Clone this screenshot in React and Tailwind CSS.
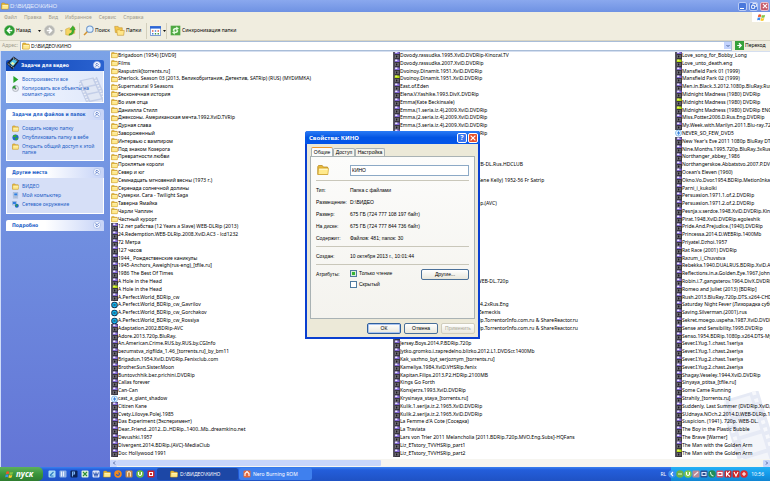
import React from 'react';

const col1 = [
  'Brigadoon (1954) [DVD9]', 'Films', 'Rasputnik[torrents.ru]',
  'Sherlock. Season 03 (2013, Великобритания, Детектив, SATRip) (RUS) (MYDИМКА)',
  'Supernatural 9 Seasons', 'Бесконечная история', 'Во имя отца', 'Даниэлла Стилл',
  'Джексоны. Американская мечта.1992.XviD.TVRip', 'Дурная слава', 'Завороженный',
  'Интервью с вампиром', 'Под знаком Козерога', 'Превратности любви', 'Проклятые короли',
  'Север и юг', 'Семнадцать мгновений весны (1973 г.)', 'Серенада солнечной долины',
  'Сумерки. Сага - Twilight Saga', 'Таверна Ямайка', 'Чарли Чаплин', 'Частный курорт',
  '12 лет рабства (12 Years a Slave) WEB-DLRip (2013)', '24.Redemption.WEB-DLRip.2008.XviD.AC3 - lcd1232',
  '72 Метра', '127 часов', '1944_ Рождественские каникулы', '1945-Anchors_Aweigh(rus-eng)_[tfile.ru]',
  '1986 The Best Of Times', 'A Hole in the Head', 'A Hole in the Head', 'A.Perfect.World_BDRip_cw',
  'A.Perfect.World_BDRip_cw_Gavrilov', 'A.Perfect.World_BDRip_cw_Gorchakov', 'A.Perfect.World_BDRip_cw_Rossiya',
  'Adaptation.2002.BDRip-AVC', 'Adore.2013.720p.BluRay.', 'An.American.Crime.RUS.by.RUS.by.CGInfo',
  'bezumstva_zigfilda_1.46_[torrents.ru]_by_bm11', 'Brigadun.1954.XviD.DVDRip.Fenixclub.com',
  'Brother.Sun.Sister.Moon', 'Buntovchhik.bez.prichini.DVDRip', 'Callas forever', 'Can-Can',
  'cast_a_giant_shadow', 'Citizen Kane', 'Cvety.Lilovye.Polej.1985', 'Das Experiment (Эксперимент)',
  'Dear..Friend..2012..D..HDRip..1400..Mb..dreamkino.net', 'Devushki.1957',
  'Divergent.2014.BDRip.(AVC)-MediaClub', 'Doc Hollywood 1991',
];

const col2 = [
  'Dovody.rassudka.1995.XviD.DVDRip-Kinozal.TV', 'Dovody.rassudka.2007.XviD.DVDRip',
  'Dvoinoy.Dinamit.1951.XviD.DVDRip', 'Dvoinoy.Dinamit.1951.XviD.DVDRip', 'East.of.Eden',
  'Elena.V.Yashike.1993.DivX.DVDRip', 'Emma(Kate Beckinsale)', 'Emma.(1.seria.iz.4).2009.XviD.DVDRip',
  'Emma.(2.seria.iz.4).2009.XviD.DVDRip', 'Emma.(3.seria.iz.4).2009.XviD.DVDRip',
  'Emma.(4.seria.iz.4).2009.XviD.DVDRip', 'Fanny', 'Flipped', 'Forrest Gump',
  'Frances.2012.BDRip.720p.x264.WEB-DL.Rus.HDCLUB', 'Gigi', 'Invitation to the Dance. Musical (Gene Kelly) 1952-56 Fr Satrip',
  'Giant', 'Gilda', 'Golubaya.bezdna.1988.D.Cut.BDRip.(AVC)', 'Grease', 'Hair', 'Harvey', 'Heidi', 'Hello Dolly', 'High Noon', 'Holiday',
  'Igra.v.chetyre.ruki.1980.PLUS', 'Inside.Llewyn.Davis.2013.BDbi', 'Inside.Llewyn.Davis.2013.Drama.WEB-DL.720p', 'Jane Eyre',
  'Iron.Man.3.2013.D.BDRip.1400Mb', 'Jack.Reacher.2012.BDRip.720p.x264.2xRus.Eng',
  'Back to the Future Part II. Robert Zemeckis', 'James.Bond.Collection.1080p.BDRip.TorrentorInfo.com.ru & ShareReactor.ru',
  'James.Bond.Collection.1080p.BDRip.TorrentorInfo.com.ru & ShareReactor.ru', 'Jersey', 'Jersey.Boys.2014.P.BDRip.720p',
  'Jytko.gromko.i.zapredelno.blizko.2012.L1.DVDScr.1400Mb', 'Kak_vazhno_byt_serjoznym_[torrents.ru]',
  'Kameliya.1984.XviD.VHSRip.fenix', 'Kapitan.Filips.2013.P2.HDRip.2100MB', 'Kings Go Forth',
  'Konsjerzs.1993.XviD.DVDRip', 'Krysinaya_staya_[torrents.ru]', 'Kulik.1.serija.iz.2.1965.XviD.DVDRip',
  'Kulik.2.serija.iz.2.1965.XviD.DVDRip', "La Femme d'A Cote (Соседка)", 'La Traviata',
  'Lars von Trier 2011 Melancholia [2011.BDRip.720p.MVO.Eng.Subs]-HQFans',
  'Liz_ETstory_TVVHSRip_part1', 'Liz_ETstory_TVVHSRip_part2',
];

const col3 = [
  'Love_song_for_Bobby_Long', 'Love_unto_death.eng', 'Mansfield Park 01 (1999)', 'Mansfield Park 02 (1999)',
  'Men.in.Black.3.2012.1080p.BluRay.Rus.Eng', 'Midnight Madness (1980) DVDRip', 'Midnight Madness (1980) DVDRip',
  'Midnight Madness (1980) DVDRip ENG', 'Miss.Potter.2006.D.Rus.Eng.DVDRip', 'My.Week.with.Marilyn.2011.Blu-ray.720p',
  'NEVER_SO_FEW_DVD5', "New Year's Eve 2011 1080p BluRay DTS x264", 'Nine.Months.1995.720p.BluRay.3xRus.Eng',
  'Northanger_abbey_1986', 'Northangerskoe.Abbatstvo.2007.P.DVDRip', "Ocean's Eleven (1960)",
  'Okno.Vo.Dvor.1954.BDRip.MetionInka', 'Parni_i_kukolki', 'Persuasion.1971.1.of.2.DVDRip',
  'Persuasion.1971.2.of.2.DVDRip', 'Pesnja.v.serdce.1948.XviD.DVDRip.Kinozal', 'Pirat.1948.XviD.DVDRip.egoleshik',
  'Pride.And.Prejudice.(1940).DVDRip', 'Princessa.2014.D.WEBRip.1400Mb', 'Priyatel.Dzhoi.1957',
  'Rat Race (2001) DVDRip', 'Razum_i_Chuvstva', 'Rebekka.1940.DUALRUS.BDRip.XviD.AC3',
  'Reflections.in.a.Golden.Eye.1967.John', 'Robin.i.7.gangsterov.1964.DivX.DVDRip', 'Romeo and Juliet (2013) [BDRip]',
  'Rush.2013.BluRay.720p.DTS.x264-CHD', 'Saturday Night Fever (Лихорадка субботы)', 'Saving.Silverman.(2001).rus',
  'Sekret.moego.uspeha.1987.XviD.DVDRip', 'Sense and Sensibility.1995.DVDRip', 'Senso.1954.BDRip.1080p.x264.DTS-My',
  'Sever.I.Yug.1.chast.1seriya', 'Sever.I.Yug.1.chast.2seriya', 'Sever.I.Yug.2.chast.1seriya',
  'Sever.I.Yug.2.chast.2seriya', 'Shagay.Veseley.1944.XviD.DVDRip', 'Sinyaya_ptitsa_[tfile.ru]',
  'Some Came Running', 'Strahily_[torrents.ru]', 'Suddenly, Last Summer (DVDRip,XviD,RUS)',
  'SUdnaya.NOch.2.2014.D.WEB-DLRip.1400', 'Suspicion. (1941). 720p. WEB-DL.', 'The Boy in the Plastic Bubble',
  'The Brave [Warner]', 'The Man with the Golden Arm', 'The Man with the Golden Arm',
];

const special = {
  0: { 30: 'green', 32: 'disc', 33: 'disc', 34: 'disc', 44: 'bolt' },
  1: { 3: 'green' },
  2: { 1: 'green', 6: 'green', 7: 'green', 10: 'bolt', 51: 'green' },
};

function Folder({ className = 'size-2' }) {
  return (
    <svg viewBox="0 0 16 16" className={`shrink-0 ${className}`} aria-hidden="true">
      <path d="M1 3.500 2 2h5l1.500 2H14v10H1z" fill="#e9b93a" stroke="#b58a1e" strokeWidth="1" />
      <path d="M2 5.500h13.500L14.500 14H1.500z" fill="#ffe98c" stroke="#c99a27" strokeWidth=".8" />
      <path d="M3 7h11" stroke="#fffbd6" strokeWidth="1.300" />
    </svg>
  );
}

function FileIcon({ kind }) {
  if (kind === 'folder') return <Folder className="h-2 w-[7px]" />;
  if (kind === 'disc')
    return (
      <svg viewBox="0 0 16 16" className="h-2 w-[7px] shrink-0" aria-hidden="true">
        <circle cx="8" cy="8" r="7.500" fill="#0d2a4a" />
        <circle cx="8" cy="8" r="5.500" fill="#16b4ec" />
        <circle cx="8" cy="8" r="2.200" fill="#06324f" />
        <circle cx="8" cy="8" r="1" fill="#d8f6ff" />
      </svg>
    );
  if (kind === 'bolt')
    return (
      <svg viewBox="0 0 16 16" className="h-2 w-[7px] shrink-0" aria-hidden="true">
        <circle cx="8" cy="8" r="7" fill="#e4f2ff" stroke="#5aa5e4" strokeWidth="1.500" />
        <path d="M9 2 4.500 9H8l-1 5 5-7H8.500z" fill="#1769d2" />
      </svg>
    );
  const top = kind === 'green' ? '#b6e010' : '#8368d6';
  return (
    <svg viewBox="0 0 16 16" className="h-2 w-[7px] shrink-0" preserveAspectRatio="none" aria-hidden="true">
      <path d="M0 0h16v16H0z" fill="#39363f" />
      <path d="M4 1h11v5H4z" fill={top} />
      <path d="M5 1h5v3H5z" fill={kind === 'green' ? '#e6f56a' : '#efeafc'} />
      <path d="M1 1h2v2H1zM1 5h2v2H1zM1 9h2v2H1zM1 13h2v2H1z" fill="#a9a6b3" />
      <path d="M5 8h8v6H5z" fill="#77747e" />
      <path d="M7 9h3v4H7z" fill="#17151c" />
    </svg>
  );
}

function Column({ items, index }) {
  return (
    <ul className="grid min-h-0 min-w-0 grid-rows-[repeat(52,minmax(0,1fr))]">
      {items.map((t, i) => {
        const kind = index === 0 && i < 22 ? 'folder' : special[index][i] || 'video';
        return (
          <li key={i} className="flex min-h-0 items-center whitespace-nowrap">
            <FileIcon kind={kind} />
            {t}
          </li>
        );
      })}
    </ul>
  );
}

function FilmStrip({ className, color }) {
  return (
    <svg viewBox="0 0 48 72" className={className} preserveAspectRatio="none" aria-hidden="true">
      <g transform="rotate(-17 24 36)">
        <path d="M4 4h42v80H4z" fill={color} />
        <path d="M13 7h23v17H13zM13 28h23v17H13zM13 49h23v17H13zM13 70h23v14H13z" fill="#fff" opacity=".5" />
        <path d="M8 4v80M41 4v80" stroke="#fff" strokeWidth="4" strokeDasharray="4 4" opacity=".7" />
      </g>
    </svg>
  );
}

function Chevron({ down }) {
  return (
    <svg viewBox="0 0 18 18" className="size-2 shrink-0" aria-hidden="true">
      <circle cx="9" cy="9" r="8" fill="#f4f7ff" stroke="#9db4e6" strokeWidth="1.500" />
      <g transform={down ? 'rotate(180 9 9)' : undefined}>
        <path d="M5.500 8.500 9 5l3.500 3.500M5.500 13 9 9.500l3.500 3.500" fill="none" stroke="#2d55b5" strokeWidth="1.800" />
      </g>
    </svg>
  );
}

function Panel({ title, primary, closed, children }) {
  return (
    <section className="relative">
      <h2>
        <button
          className={`flex h-[11px] w-full items-center justify-between rounded-t-[2px] pr-[3px] font-[DejaVu_Sans_Condensed,sans-serif] text-[5px] leading-none font-bold ${
            primary
              ? 'bg-linear-to-r from-[#0f48b8] to-[#2a62d0] pl-[15px] text-white'
              : 'bg-linear-to-r from-white from-40% to-[#c6d3f7] pl-[6px] text-[#215dc6]'
          }`}
        >
          {title}
          <Chevron down={closed} />
        </button>
      </h2>
      {children && (
        <ul className={`relative flex flex-col gap-[2px] border border-t-0 border-white px-[5px] py-[5px] text-[#215dc6] ${primary ? 'bg-linear-to-r from-[#f2f6ff] to-[#dfe8fb]' : 'bg-[#d6dff7]'}`}>
          {children}
        </ul>
      )}
    </section>
  );
}

function Task({ icon, children }) {
  return (
    <li className="relative">
      <a href="#task" className="flex items-start gap-[3px] leading-[6px]">
        <span className="flex size-[7px] shrink-0 items-center justify-center">{icon}</span>
        <span>{children}</span>
      </a>
    </li>
  );
}

const Globe = () => (
  <svg viewBox="0 0 16 16" className="size-[7px]" aria-hidden="true">
    <circle cx="8" cy="8" r="7" fill="#1f66c9" />
    <path d="M3 3q5-3 8 0l-2 4-4 1-3-2zM8 9l5-1 1 3-4 4-3-3z" fill="#34a53a" />
  </svg>
);
const Computer = () => (
  <svg viewBox="0 0 16 16" className="size-[7px]" aria-hidden="true">
    <path d="M3 1h10v9H3z" fill="#d8e4f4" stroke="#6b87b5" />
    <path d="M5 3h7v5H5z" fill="#2f7ee0" />
    <path d="M6 10h5v2h3v3H2v-3h4z" fill="#a9bcd8" />
  </svg>
);
const Network = () => (
  <svg viewBox="0 0 16 16" className="size-[7px]" aria-hidden="true">
    <path d="M1 1h9v8H1z" fill="#d8e4f4" stroke="#6b87b5" />
    <path d="M2 2h7v5H2z" fill="#2f7ee0" />
    <circle cx="11" cy="11" r="4.500" fill="#1f66c9" />
    <path d="M8 9q3-3 5 0l-2 3-2 1z" fill="#34a53a" />
  </svg>
);

function WinLogo({ className }) {
  return (
    <svg viewBox="0 0 16 16" className={className} aria-hidden="true">
      <path d="M2.500 3q2.500-1.500 5 0l-1 4.500q-2.500-1.300-5 0z" fill="#f0562b" />
      <path d="M8.500 3.500q2.500 1.300 6 0l-1.200 4.500q-2.800 1.300-5.800 0z" fill="#83c443" />
      <path d="M1.200 8.500q2.500-1.300 5 0l-1 4.500q-2.500-1.300-5 0z" fill="#3b8df0" />
      <path d="M7.200 9q2.800 1.300 5.800 0l-1.200 4.500q-2.800 1.300-5.800 0z" fill="#fbc82a" />
    </svg>
  );
}

function WinControls() {
  return (
    <div className="flex gap-[2px]">
      <button aria-label="Свернуть" className="flex size-[9px] items-end rounded-[2px] border border-[#b9cbf5] bg-[#4a78dc] p-px">
        <span className="h-px w-[4px] bg-white" />
      </button>
      <button aria-label="Восстановить" className="flex size-[9px] items-center justify-center rounded-[2px] border border-[#b9cbf5] bg-[#4a78dc]">
        <svg viewBox="0 0 10 10" className="size-[6px]" aria-hidden="true">
          <path d="M3 3V1h6v5H7M1 4h5v5H1z" fill="none" stroke="#fff" strokeWidth="1.500" />
        </svg>
      </button>
      <button aria-label="Закрыть" className="flex size-[9px] items-center justify-center rounded-[2px] border border-[#e3bfd0] bg-[#c75c6c]">
        <svg viewBox="0 0 10 10" className="size-[6px]" aria-hidden="true">
          <path d="m1.500 1.500 7 7m0-7-7 7" stroke="#fff" strokeWidth="1.800" />
        </svg>
      </button>
    </div>
  );
}

const Sep = () => <span className="h-4 w-px bg-[#d3cfbc]" />;
const Caret = ({ dim }) => (
  <svg viewBox="0 0 6 4" className="h-[2px] w-[3px]" aria-hidden="true">
    <path d="M0 0h6L3 4z" fill={dim ? '#aaa' : '#111'} />
  </svg>
);
const Arrow = ({ left }) => (
  <path d={left ? 'M9 4 5 8l4 4M5 8h7' : 'M7 4l4 4-4 4M11 8H4'} fill="none" stroke="#fff" strokeWidth="2.200" />
);

function Toolbar() {
  return (
    <div className="flex h-[19px] items-center border-b border-[#d9d5c3] bg-[#f0eddf] pl-[4px]">
      <button className="flex w-[30px] items-center gap-px">
        <svg viewBox="0 0 16 16" className="size-[11px]" aria-hidden="true">
          <circle cx="8" cy="8" r="7.500" fill="#2c9c32" stroke="#87c789" strokeWidth=".8" />
          <Arrow left />
        </svg>
        Назад
      </button>
      <span className="flex w-[10px] justify-center"><Caret /></span>
      <button aria-label="Вперед" className="w-[13px]">
        <svg viewBox="0 0 16 16" className="size-[11px]" aria-hidden="true">
          <circle cx="8" cy="8" r="7.500" fill="#b9b9b5" stroke="#d4d4cf" />
          <Arrow />
        </svg>
      </button>
      <span className="flex w-[8px] justify-center"><Caret dim /></span>
      <button aria-label="Вверх" className="w-[14px]">
        <svg viewBox="0 0 16 16" className="size-[11px]" aria-hidden="true">
          <path d="M1 6l5-2 2 1 6-2v9l-9 3-4-1z" fill="#f6d566" stroke="#c39a2b" strokeWidth=".7" />
          <path d="M6 13q5-1 4-6H7l4.500-6L15 7h-2q1 7-7 8z" fill="#3bb32f" stroke="#1f7c1b" strokeWidth=".5" />
        </svg>
      </button>
      <Sep />
      <button className="ml-[3px] flex w-[31px] items-center gap-px">
        <svg viewBox="0 0 16 16" className="size-[11px] shrink-0" aria-hidden="true">
          <path d="m1.500 14.500 5-5" stroke="#d4932f" strokeWidth="2.200" />
          <circle cx="10" cy="6" r="4.700" fill="#dff0ff" stroke="#6b95ca" strokeWidth="1.500" />
        </svg>
        Поиск
      </button>
      <button className="flex w-[32px] items-center gap-px">
        <svg viewBox="0 0 16 16" className="size-[11px] shrink-0" aria-hidden="true">
          <path d="M1 2h5l1 2h5v7H2z" fill="#f4c64c" stroke="#c08f22" strokeWidth=".8" />
          <path d="M4 7h4l1 1h6l-1 7H5z" fill="#ffe68a" stroke="#c08f22" strokeWidth=".8" />
        </svg>
        Папки
      </button>
      <Sep />
      <button aria-label="Вид" className="ml-[3px] flex w-[16px] items-center gap-[2px]">
        <svg viewBox="0 0 16 14" className="h-[10px] w-[11px]" aria-hidden="true">
          <path d="M.5.500h15v13H.5z" fill="#fff" stroke="#3c6ccb" />
          <path d="M0 0h16v3.500H0z" fill="#2c66d6" />
          <path d="M3 6h2v2H3zM11 6h2v2h-2z" fill="#d94d3c" />
          <path d="M7 6h2v2H7zM3 10h2v2H3z" fill="#3b78d8" />
          <path d="M7 10h2v2H7zM11 10h2v2h-2z" fill="#41964a" />
        </svg>
        <Caret />
      </button>
      <Sep />
      <button className="ml-[3px] flex items-center gap-px">
        <svg viewBox="0 0 16 16" className="size-[11px]" aria-hidden="true">
          <path d="M1 1h14v14H1z" fill="#4fa843" />
          <path d="M4 8q0-4 5-4V2l4 3-4 3V6Q6 6 6 9zM12 8q0 4-5 4v2l-4-3 4-3v2q3 0 3-3z" fill="#e6fbe0" />
        </svg>
        Синхронизация папки
      </button>
    </div>
  );
}

function Sidebar() {
  return (
    <aside className="relative flex w-[110px] shrink-0 flex-col gap-[6px] border-l border-[#cfdcf8] bg-linear-to-b from-[#7ba2e7] to-[#6375d6] pt-[9px] pr-[6px] pl-[5px]">
      <Panel title="Задачи для видео" primary>
        <FilmStrip className="absolute right-0 bottom-0 h-[25px] w-[24px]" color="#c3cee8" />
        <Task icon={<svg viewBox="0 0 10 10" className="size-[7px]" aria-hidden="true"><path d="M2 0l7 5-7 5z" fill="#27a52b" /></svg>}>Воспроизвести все</Task>
        <Task icon={<svg viewBox="0 0 16 16" className="size-[7px]" aria-hidden="true"><circle cx="8" cy="8" r="7" fill="#e7e9ee" stroke="#767f8d" /><path d="M8 8V1a7 7 0 0 0-7 7z" fill="#2d9b35" /><circle cx="8" cy="8" r="2" fill="#596372" /></svg>}>
          Копировать все объекты на<br />компакт-диск
        </Task>
      </Panel>
      <Panel title="Задачи для файлов и папок">
        <Task icon={<Folder className="size-[7px]" />}>Создать новую папку</Task>
        <Task icon={<Globe />}>Опубликовать папку в вебе</Task>
        <Task icon={<Folder className="size-[7px]" />}>Открыть общий доступ к этой<br />папке</Task>
      </Panel>
      <Panel title="Другие места">
        <Task icon={<Folder className="size-[7px]" />}>ВИДЕО</Task>
        <Task icon={<Computer />}>Мой компьютер</Task>
        <Task icon={<Network />}>Сетевое окружение</Task>
      </Panel>
      <Panel title="Подробно" closed />
      <svg viewBox="0 0 24 24" className="absolute top-[5px] left-[5px] size-[14px]" aria-hidden="true">
        <path d="m1 13 12-12 10 7-12 15z" fill="#18202d" />
        <path d="m6 12 7-7 6 4-7 9z" fill="#4fc0e8" />
        <path d="m8 13 3-3 4 3-3 3z" fill="#eef6a5" />
        <path d="m3 13 11 8M12 3l9 6" stroke="#dfe8f2" strokeWidth="1.500" strokeDasharray="2 1.500" />
      </svg>
    </aside>
  );
}

function Row({ label, children }) {
  return (
    <div className="flex h-3 items-center">
      <dt className="w-[34px] shrink-0">{label}</dt>
      <dd>{children}</dd>
    </div>
  );
}

const xpButton = 'h-[11px] rounded-[2px] border bg-linear-to-b from-white to-[#e9e7dc] text-center';

function Dialog() {
  return (
    <div role="dialog" aria-label="Свойства: КИНО" className="absolute top-[131px] left-[305px] flex h-[208px] w-[175px] flex-col rounded-t-[3px] border-2 border-t-0 border-[#0a3fd0] bg-[#ece9d8] font-['Liberation_Sans',sans-serif] text-[5px] leading-none text-black">
      <header className="-mx-[2px] flex h-[13px] shrink-0 items-center rounded-t-[3px] bg-linear-to-b from-[#2a7bf5] via-[#0355e3] to-[#0455ea] pr-[2px] pl-[4px] font-['Noto_Sans',sans-serif] text-[6px] font-bold text-white">
        <h1 className="grow">Свойства: КИНО</h1>
        <button aria-label="Справка" className="mr-px flex size-[10px] items-center justify-center rounded-[2px] border border-white bg-[#3a74ee] text-[7px] leading-none">?</button>
        <button aria-label="Закрыть" className="flex size-[10px] items-center justify-center rounded-[2px] border border-white bg-[#e5502c]">
          <svg viewBox="0 0 10 10" className="size-[6px]" aria-hidden="true"><path d="m1 1 8 8m0-8-8 8" stroke="#fff" strokeWidth="2" /></svg>
        </button>
      </header>
      <div className="flex min-h-0 grow flex-col px-[3px] pt-[3px] pb-[3px]">
        <div role="tablist" className="flex items-end pl-px">
          <button role="tab" aria-selected="true" className="h-[9px] w-[22px] rounded-t-[2px] border border-b-0 border-t-[#f0982c] border-x-[#a9b2b4] bg-[#fcfcfb]">Общие</button>
          <button role="tab" aria-selected="false" className="h-[8px] w-[22px] rounded-t-[2px] border border-b-0 border-[#a9b2b4] bg-[#f6f5ee]">Доступ</button>
          <button role="tab" aria-selected="false" className="h-[8px] w-[30px] rounded-t-[2px] border border-b-0 border-[#a9b2b4] bg-[#f6f5ee]">Настройка</button>
        </div>
        <div role="tabpanel" className="flex grow flex-col border border-[#a9b2b4] bg-linear-to-b from-[#fcfcfb] to-[#f4f3ee] px-[5px] pt-[7px]">
          <div className="flex h-3 items-center">
            <span className="w-[34px]"><Folder className="ml-px size-3" /></span>
            <input aria-label="Имя папки" defaultValue="КИНО" className="h-[11px] w-0 grow border border-[#8ca9c6] bg-white px-px outline-none" />
          </div>
          <dl className="mt-[4px] border-t border-[#c9c7ba] pt-[3px]">
            <Row label="Тип:">Папка с файлами</Row>
            <Row label="Размещение:">D:\ВИДЕО</Row>
            <Row label="Размер:">675 ГБ (724 777 108 197 байт)</Row>
            <Row label="На диске:">675 ГБ (724 777 844 736 байт)</Row>
            <Row label="Содержит:">Файлов: 481; папок: 30</Row>
          </dl>
          <dl className="mt-[2px] border-t border-[#c9c7ba] pt-[3px] pb-[2px]">
            <Row label="Создан:">10 октября 2013 г., 10:01:44</Row>
          </dl>
          <div className="flex border-t border-[#c9c7ba] pt-[4px]">
            <span className="w-[34px] pt-[3px]">Атрибуты:</span>
            <div className="flex grow flex-col gap-[4px] pt-px">
              <label className="flex h-[7px] items-center gap-[2px]">
                <input type="checkbox" defaultChecked className="size-[7px] appearance-none border border-[#4f7ba0] bg-white checked:bg-[#35b435] checked:shadow-[inset_0_0_0_1px_#d8f0d8]" />
                Только чтение
              </label>
              <label className="flex h-[7px] items-center gap-[2px]">
                <input type="checkbox" className="size-[7px] appearance-none border border-[#4f7ba0] bg-white" />
                Скрытый
              </label>
            </div>
            <button className={`${xpButton} w-[48px] border-[#4a7099]`}>Другие...</button>
          </div>
        </div>
        <div className="mt-[4px] flex justify-end gap-[3px]">
          <button className={`${xpButton} w-[34px] border-[#2f5f9c] shadow-[inset_0_0_0_1px_#a9c4f0]`}>ОК</button>
          <button className={`${xpButton} w-[34px] border-[#4a7099]`}>Отмена</button>
          <button disabled className={`${xpButton} w-[34px] border-[#d0cdbd] text-[#aca899]`}>Применить</button>
        </div>
      </div>
    </div>
  );
}

const Sq = ({ bg, fg, d, round }) => (
  <svg viewBox="0 0 16 16" className="size-2 shrink-0" aria-hidden="true">
    {round ? <circle cx="8" cy="8" r="7.500" fill={bg} /> : <rect x="1" y="1" width="14" height="14" rx="2" fill={bg} />}
    <path d={d} fill="none" stroke={fg} strokeWidth="2.200" />
  </svg>
);

function Taskbar() {
  return (
    <footer className="flex h-[14px] shrink-0 items-center bg-linear-to-b from-[#3a80f0] via-[#245edb] via-20% to-[#1f52c4] text-white">
      <button className="flex h-full w-[43px] items-center gap-[2px] rounded-r-[5px] bg-linear-to-b from-[#5cb15c] via-[#3b963b] to-[#2f7d2f] pl-[5px] font-['Open_Sans',sans-serif] text-[8px] font-bold italic">
        <WinLogo className="size-[9px]" />
        пуск
      </button>
      <div className="ml-[5px] flex w-[109px] items-center gap-[3px]">
        <Sq bg="#a9dcf5" fg="#2d7cc5" d="M4 11 11 4M5 12h6" />
        <Sq bg="#8fb0e4" fg="#e8f0ff" d="M5 3v10M9 3v10" />
        <Sq bg="#0c2358" fg="#7ab2f5" d="M5 13V4h4v4H5" />
        <Sq bg="#dff2da" fg="#2c8f35" d="m4 4 8 8m0-8-8 8" />
        <Sq bg="#dfe6f8" fg="#3d63b8" d="M3 5l3 7 2-6 2 6 3-7" />
        <Folder />
        <Sq round bg="#f08a1c" fg="#2c5dbb" d="M5 8a3 3 0 1 0 4-3" />
        <Sq bg="#c28849" fg="#f8e1bb" d="M5 13V5l3-2 3 2v8" />
        <Sq round bg="#6dbb45" fg="#fff" d="M5 4v5q3 4 6 0V4" />
        <Sq bg="#c8232b" fg="#fff" d="M5 5h6v6H5z" />
      </div>
      <button className="flex h-[12px] w-[81px] items-center gap-[2px] rounded-[2px] bg-[#1c47a6] pl-[13px]">
        <Folder />D:\ВИДЕО\КИНО
      </button>
      <button className="ml-px flex h-[12px] w-[73px] items-center gap-[2px] rounded-[2px] bg-[#3f80ee] pl-[4px]">
        <Sq bg="#e4683a" fg="#fff" d="M4 12V7l4-4 4 4v5" />Nero Burning ROM
      </button>
      <span className="mr-[5px] ml-auto">RL</span>
      <div className="flex h-full items-center bg-linear-to-b from-[#25b0f5] via-[#139bea] to-[#1185d2] pr-[6px]">
        <button aria-label="Показать значки" className="-ml-[3px]"><Sq round bg="#3c8ef0" fg="#fff" d="M10 4 6 8l4 4" /></button>
        <Sq round bg="#6ab04a" fg="#dff5c8" d="M4 8h8" />
        <Sq round bg="#7cc84d" fg="#fff" d="M5 4v5q3 4 6 0V4" />
        <Sq bg="#b98a96" fg="#f6e9ee" d="M4 11l8-7" />
        <Sq bg="#2d4f91" fg="#d9e5fb" d="M4 5h8v6H4z" />
        <Sq round bg="#228b58" fg="#c8f3d2" d="M5 4q0 7 6 8" />
        <Sq bg="#d64e62" fg="#fff" d="M4 5h8v6H4z" />
        <Sq bg="#c81f27" fg="#fff" d="M5 3v10M12 3 6 8l6 5" />
        <Sq bg="#d32222" fg="#fff" d="m4 4 4 8 4-8" />
        <Sq round bg="#da2f31" fg="#fff" d="M8 4v8M4 8h8" />
        <time className="ml-[3px]">10:56</time>
      </div>
    </footer>
  );
}

export default function App() {
  return (
    <div className="relative flex h-screen min-w-0 flex-col overflow-hidden bg-white font-['Noto_Sans',sans-serif] text-[5px] leading-none text-black">
      <header className="flex h-[12px] shrink-0 items-center gap-px bg-linear-to-b from-[#8aa8ee] to-[#6f92e3] pr-px pl-px font-['Liberation_Sans',sans-serif] text-[6px] text-[#e4ebfb]">
        <Folder />
        <h1 className="grow">D:\ВИДЕО\КИНО</h1>
        <WinControls />
      </header>
      <div className="flex h-[10px] shrink-0 items-center justify-between bg-[#f0eddf] text-[#9d9a8c]">
        <nav className="flex gap-[7px] pl-[4px]">
          {['Файл', 'Правка', 'Вид', 'Избранное', 'Сервис', 'Справка'].map((m) => (
            <button key={m}>{m}</button>
          ))}
        </nav>
        <span className="flex h-full w-[18px] items-center justify-center bg-white"><WinLogo className="size-[9px]" /></span>
      </div>
      <Toolbar />
      <form className="flex h-[10px] shrink-0 items-center bg-[#f0eddf] pr-px" onSubmit={(e) => e.preventDefault()}>
        <label htmlFor="addr" className="w-[20px] pl-[2px] text-[#9d9a8c]">Адрес:</label>
        <div className="flex h-full grow items-center gap-px border border-[#a9bdd8] bg-white pl-px">
          <Folder />
          <input id="addr" defaultValue="D:\ВИДЕО\КИНО" className="h-[8px] w-0 grow outline-none" />
          <button type="button" aria-label="Список адресов" className="flex size-[7px] items-center justify-center bg-[#c3d3fd]">
            <svg viewBox="0 0 8 6" className="size-[4px]" aria-hidden="true"><path d="m1 1 3 3 3-3" fill="none" stroke="#3c5590" strokeWidth="1.800" /></svg>
          </button>
        </div>
        <button className="ml-[3px] flex w-[34px] items-center gap-px">
          <svg viewBox="0 0 16 16" className="size-[9px]" aria-hidden="true"><path d="M0 0h16v16H0z" fill="#35a03a" /><Arrow /></svg>
          Переход
        </button>
      </form>
      <main className="flex min-h-0 grow">
        <Sidebar />
        <div className="relative flex min-w-0 grow flex-col border-t border-[#d5dff0]">
          <FilmStrip className="absolute right-0 bottom-2 h-[68px] w-[46px]" color="#e6eaf5" />
          <div className="relative grid min-h-0 grow auto-cols-[282px] grid-flow-col grid-rows-1 overflow-hidden pb-[2px] pl-px">
            <Column items={col1} index={0} />
            <Column items={col2} index={1} />
            <Column items={col3} index={2} />
          </div>
          <div className="flex h-[8px] shrink-0 items-center justify-between bg-[#f6f5f0]">
            <button aria-label="Влево" className="flex size-[7px] items-center justify-center rounded-[1px] bg-[#c8d6fb]">
              <svg viewBox="0 0 6 8" className="size-[4px]" aria-hidden="true"><path d="M5 1 2 4l3 3" fill="none" stroke="#3c5590" strokeWidth="1.800" /></svg>
            </button>
            <span className="mr-auto h-[6px] w-2/5 rounded-[1px] bg-[#c8d6fb]" />
            <button aria-label="Вправо" className="flex size-[7px] items-center justify-center rounded-[1px] bg-[#c8d6fb]">
              <svg viewBox="0 0 6 8" className="size-[4px]" aria-hidden="true"><path d="m1 1 3 3-3 3" fill="none" stroke="#3c5590" strokeWidth="1.800" /></svg>
            </button>
          </div>
        </div>
      </main>
      <Taskbar />
      <Dialog />
    </div>
  );
}
